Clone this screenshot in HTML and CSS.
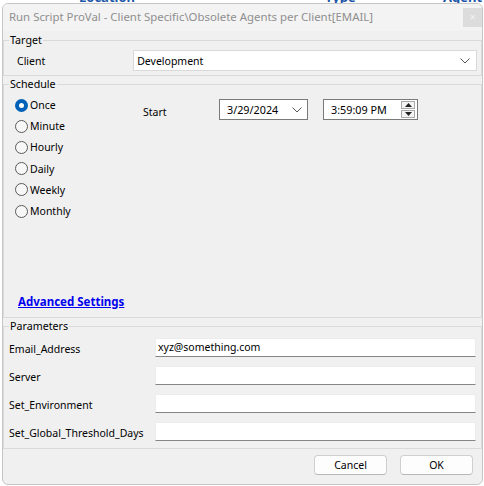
FILE: index.html
```html
<!DOCTYPE html>
<html>
<head>
<meta charset="utf-8">
<link rel="stylesheet" href="styles.css">
</head>
<body>
<div class="backdrop">
  <span class="bg-col bg-loc"><span class="bg-text">Location</span></span>
  <span class="bg-col bg-type"><span class="bg-text">Type</span></span>
  <span class="bg-col bg-agent"><span class="bg-text">Agent</span></span>
</div>
<div class="dialog">
  <div class="titlebar">
    <span class="title">Run Script ProVal - Client Specific\Obsolete Agents per Client[EMAIL]</span>
    <span class="close">×</span>
  </div>

  <fieldset class="group target">
    <legend>Target</legend>
    <div class="client-row">
      <span class="client-label">Client</span>
      <div class="combo">
        <span>Development</span>
        <svg class="chev" width="10" height="6" viewBox="0 0 10 6"><path d="M0.5 0.5 L5 5 L9.5 0.5" fill="none" stroke="#555" stroke-width="1"/></svg>
      </div>
    </div>
  </fieldset>

  <fieldset class="group schedule">
    <legend>Schedule</legend>
    <div class="sched-body">
      <div class="radios">
        <div class="radio-row"><span class="radio checked"></span><span>Once</span></div>
        <div class="radio-row"><span class="radio"></span><span>Minute</span></div>
        <div class="radio-row"><span class="radio"></span><span>Hourly</span></div>
        <div class="radio-row"><span class="radio"></span><span>Daily</span></div>
        <div class="radio-row"><span class="radio"></span><span>Weekly</span></div>
        <div class="radio-row"><span class="radio"></span><span>Monthly</span></div>
      </div>
      <div class="start">
        <span class="start-label">Start</span>
        <div class="datebox">
          <span>3/29/2024</span>
          <svg class="chev" width="10" height="6" viewBox="0 0 10 6"><path d="M0.5 0.5 L5 5 L9.5 0.5" fill="none" stroke="#555" stroke-width="1"/></svg>
        </div>
        <div class="timebox">
          <span>3:59:09 PM</span>
          <div class="spin">
            <div class="spin-btn"><svg width="7" height="4" viewBox="0 0 7 4"><path d="M0 4 L3.5 0 L7 4 Z" fill="#222"/></svg></div>
            <div class="spin-btn"><svg width="7" height="4" viewBox="0 0 7 4"><path d="M0 0 L3.5 4 L7 0 Z" fill="#222"/></svg></div>
          </div>
        </div>
      </div>
    </div>
    <a class="adv" href="#">Advanced Settings</a>
  </fieldset>

  <fieldset class="group params">
    <legend>Parameters</legend>
    <div class="param-row"><span class="param-label">Email_Address</span><div class="param-input">xyz@something.com</div></div>
    <div class="param-row"><span class="param-label">Server</span><div class="param-input"></div></div>
    <div class="param-row"><span class="param-label">Set_Environment</span><div class="param-input"></div></div>
    <div class="param-row"><span class="param-label">Set_Global_Threshold_Days</span><div class="param-input"></div></div>
  </fieldset>

  <div class="buttons">
    <div class="btn">Cancel</div>
    <div class="btn">OK</div>
  </div>
</div>
</body>
</html>
```
FILE: styles.css
```css
* { box-sizing: border-box; }
html, body { margin: 0; padding: 0; background: #ffffff; }
body {
  font-family: "Noto Sans", "Open Sans", sans-serif;
  font-size: 10.5px;
  color: #000;
  width: 484px;
  height: 486px;
  overflow: hidden;
}
.backdrop {
  height: 3px;
  overflow: hidden;
  display: flex;
  align-items: flex-start;
}
.bg-col {
  display: block;
  flex: none;
  height: 3px;
  overflow: hidden;
}
.bg-text {
  display: block;
  font-weight: bold;
  font-size: 13px;
  line-height: 12px;
  margin-top: -9px;
  color: #1d56a8;
  white-space: nowrap;
}
.bg-loc { margin-left: 79px; width: 246px; }
.bg-type { width: 118px; }
.bg-agent { width: 41px; }

.dialog {
  margin-left: 2px;
  width: 481px;
  height: 482px;
  border: 1px solid #c6c6c6;
  border-radius: 6px;
  background: #f0f0f0;
  display: flex;
  flex-direction: column;
  overflow: hidden;
}
.titlebar {
  height: 27px;
  flex: none;
  display: flex;
  align-items: flex-start;
  justify-content: space-between;
  background: #f3f3f3;
}
.title {
  margin-left: 6px;
  margin-top: 5px;
  font-size: 11.4px;
  color: #8f8f8f;
  white-space: nowrap;
}
.close {
  width: 19px;
  height: 19px;
  margin-top: 4px;
  margin-right: 0;
  background: #dcdcdc;
  color: #f4f4f4;
  font-size: 10px;
  line-height: 19px;
  text-align: center;
}

.group {
  margin: 0;
  border: 1px solid #dadada;
  padding: 0 4px 0 5px;
  min-width: 0;
}
.group legend {
  padding: 0 1px;
  line-height: 16px;
  font-size: 10.7px;
}
.target { margin-top: 1px; padding-top: 2px; padding-bottom: 4px; }
.client-row {
  display: flex;
  align-items: center;
  height: 21px;
}
.client-label { margin-left: 8px; width: 118px; }
.combo {
  width: 349px;
  height: 21px;
  background: #fff;
  border: 1px solid #d9d9d9;
  display: flex;
  align-items: center;
  justify-content: space-between;
  padding: 0 6px 0 3px;
}

.schedule { padding-top: 2px; padding-bottom: 7px; }
.sched-body {
  display: flex;
  height: 200px;
}
.radios {
  width: 134px;
  padding-left: 6px;
  display: flex;
  flex-direction: column;
}
.radio-row {
  height: 21.2px;
  display: flex;
  align-items: center;
  gap: 2px;
  padding-top: 1px;
}
.radio {
  width: 13px;
  height: 13px;
  border-radius: 50%;
  border: 1px solid #5a5a5a;
  background: #f7f7f7;
  flex: none;
}
.radio.checked {
  border: 4px solid #0061b8;
  background: #fff;
}
.start {
  display: flex;
  align-items: center;
  height: 21px;
  margin-top: 5px;
}
.start-label { width: 76px; margin-top: 4px; }
.datebox {
  width: 89px;
  height: 21px;
  background: #fff;
  border: 1px solid #7a7a7a;
  display: flex;
  align-items: center;
  justify-content: space-between;
  padding: 0 5px 0 7px;
  font-size: 10.8px;
}
.timebox {
  margin-left: 15px;
  width: 95px;
  height: 21px;
  background: #fff;
  border: 1px solid #7a7a7a;
  display: flex;
  align-items: center;
  justify-content: space-between;
  padding: 0 2px 0 7px;
  font-size: 10.8px;
}
.spin {
  display: flex;
  flex-direction: column;
  gap: 1px;
}
.spin-btn {
  width: 14px;
  height: 8px;
  border: 1px solid #a8a8a8;
  background: #f4f4f4;
  display: flex;
  align-items: center;
  justify-content: center;
}
.adv {
  display: block;
  margin-left: 9px;
  line-height: 16px;
  font-weight: bold;
  font-size: 11.5px;
  color: #0000ee;
  text-decoration: underline;
  width: max-content;
}

.params { padding-top: 4px; padding-bottom: 7px; }
.param-row {
  display: flex;
  align-items: center;
  height: 19px;
  margin-bottom: 9px;
}
.param-row:last-child { margin-bottom: 0; }
.param-label { width: 146px; margin-top: 3px; }
.param-input {
  width: 321px;
  height: 19px;
  background: #fff;
  border: 1px solid #ececec;
  border-bottom: 1px solid #858585;
  padding: 0 2px;
  line-height: 16px;
  font-size: 10.5px;
}

.buttons {
  display: flex;
  justify-content: flex-end;
  gap: 13px;
  padding-top: 6px;
  padding-right: 9px;
}
.btn {
  width: 73px;
  height: 20px;
  background: #fdfdfd;
  border: 1px solid #cfcfcf;
  border-bottom-color: #b8b8b8;
  border-radius: 4px;
  text-align: center;
  line-height: 18px;
  font-size: 10.5px;
}
```
